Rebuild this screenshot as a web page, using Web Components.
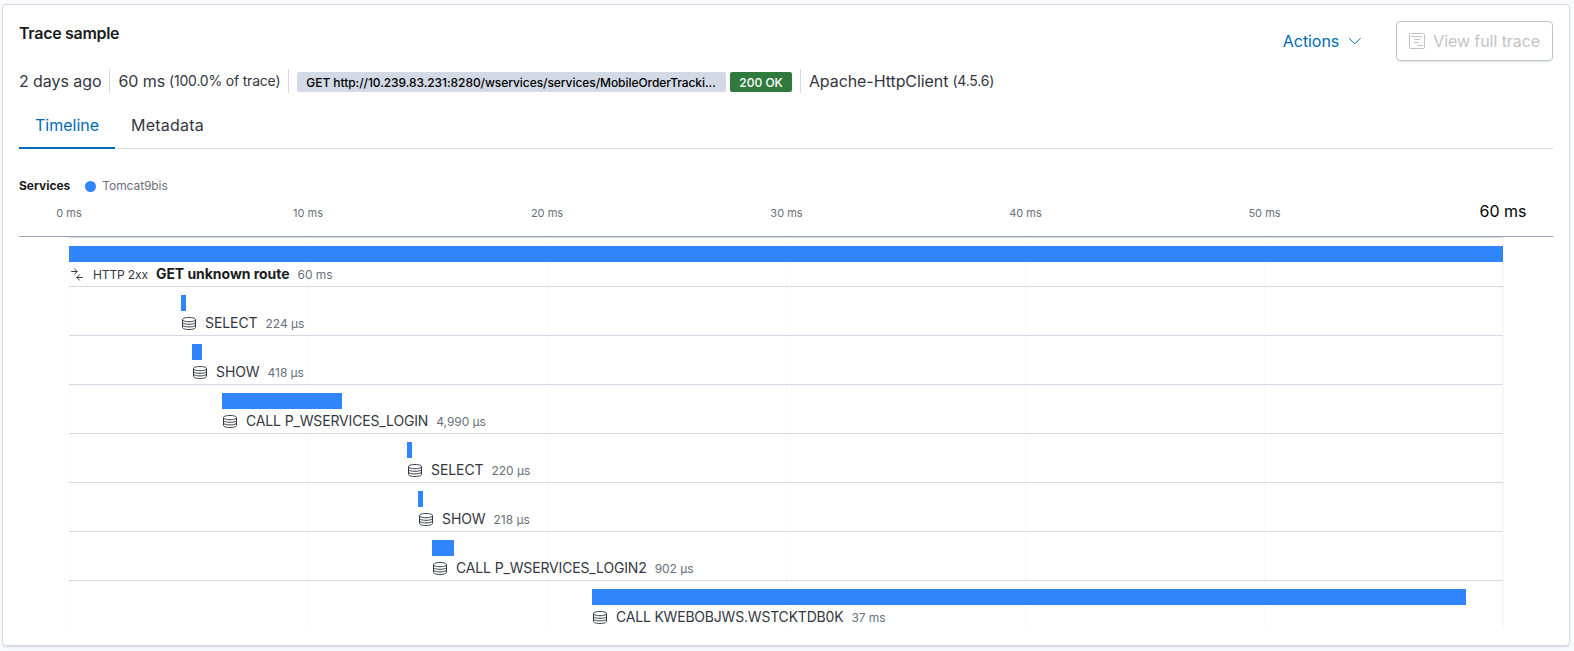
<!DOCTYPE html>
<html lang="en">
<head>
<meta charset="utf-8">
<title>Trace sample</title>
<style>
body{margin:0;background:#fafbfd;font-family:Inter,"Liberation Sans",sans-serif;color:#343741;height:651px;overflow:hidden}
</style>
</head>
<body>
<trace-panel></trace-panel>
<script>
const define = (name, html, setup) => {
  const t = document.createElement('template');
  t.innerHTML = html;
  customElements.define(name, class extends HTMLElement {
    constructor() {
      super();
      this.attachShadow({mode: 'open'}).append(t.content.cloneNode(true));
    }
    connectedCallback() { if (setup) setup(this, this.shadowRoot); }
  });
};

const ICONS = {
  db: '<path d="M1.500 4.600C1.500 3.300 4.200 2.500 8 2.500s6.500.8 6.500 2.100S11.800 6.700 8 6.700 1.500 5.900 1.500 4.600zM1.500 4.600v7.700c0 1.300 2.700 2.200 6.500 2.200s6.500-.9 6.500-2.200V4.600M1.500 7.200c0 1.300 2.700 2.100 6.500 2.100s6.500-.8 6.500-2.100M1.500 9.800c0 1.300 2.700 2.100 6.500 2.100s6.500-.8 6.500-2.100"/>',
  merge: '<path d="M2.200 5.500H8M5.200 2.500 8.200 5.500 5.200 8.500M13.800 11.500H8M10.800 8.500 7.800 11.500l3 3"/>',
  trace: '<rect x=".5" y=".5" width="15" height="15" rx="1.200"/><path d="M2 3.500h11M5 6.500h6M5 9.500h5M8 12.500h6"/>',
  down: '<path d="m2 5.200 5.200 5.100a.9.9 0 0 0 1.200 0L13.600 5.200"/>'
};
define('ui-icon', `<style>:host{display:block;flex:none;width:16px;height:16px}svg{display:block;fill:none;stroke:currentColor;stroke-width:var(--sw,1)}</style><svg width="100%" height="100%" viewBox="0 0 16 16"></svg>`,
  (h, r) => r.querySelector('svg').innerHTML = ICONS[h.getAttribute('name')]);

define('ui-badge', `<style>
:host{display:block;box-sizing:border-box;height:20px;line-height:22px;border-radius:2px;padding:0 9px;font-size:12px;font-weight:500;letter-spacing:-.06px;background:#d3dae6;color:#000;white-space:nowrap}
:host([success]){background:#317a3e;color:#fff;letter-spacing:0}
</style><slot></slot>`);

define('summary-item', `<style>
:host{display:block;height:24px;line-height:24px;font-size:16px;white-space:nowrap;border-right:1px solid #d3dae6;padding-right:8px;margin-right:8px}
:host(:last-child){border:0}
::slotted(span){letter-spacing:-.07px}
::slotted(small){font-size:14px;letter-spacing:-.2px}
::slotted(ui-badge){margin-top:3px}
div{display:flex;gap:4px}
</style><div><slot></slot></div>`);

define('ui-tab', `<style>
:host{display:block;box-sizing:border-box;height:40px;line-height:32px;padding:0 16px;font-size:16px;letter-spacing:.2px}
:host([selected]){color:#006bb4;border-bottom:2px solid #006bb4;letter-spacing:0}
</style><slot></slot>`);

define('ui-button', `<style>
:host{display:flex;box-sizing:border-box;align-items:center;height:40px;font-size:16px;gap:8px;color:#006bb4;white-space:nowrap;letter-spacing:-.07px}
:host([disabled]){color:#c2c3c6;border:1px solid #c2c3c6;border-radius:4px;padding:0 12px;box-shadow:0 2px 2px -1px rgba(152,162,179,.3)}
</style><slot></slot>`);

define('service-legend', `<style>
:host{display:flex;align-items:center;height:18px;line-height:17px;font-size:12px;color:#69707d}
b{color:#1a1c21;font-weight:700;margin-right:15px;letter-spacing:-.02px}
i{width:11px;height:11px;border-radius:50%;background:#3185fc;margin-right:6px}
span{letter-spacing:-.08px}
b,span{height:18px}
</style><b>Services</b><i></i><span><slot></slot></span>`);

define('time-axis', `<style>
:host{display:grid;grid-template-columns:repeat(6,239px) 100px;box-sizing:border-box;height:36px;margin-top:6px;padding-top:5px;border-bottom:1px solid #98a2b3}
span{font-size:11px;line-height:15px;text-align:center;color:#69707d;width:100px}
span:nth-of-type(n+4){text-indent:1px}
span:last-child{font-size:16px;color:#000;line-height:22px;margin-top:-6px;text-indent:0}
</style>`, (h, r) => {
  for (let i = 0; i < 7; i++) {
    const s = document.createElement('span');
    s.textContent = i * 10 + ' ms';
    r.append(s);
  }
});

define('trace-row', `<style>
:host{display:block;box-sizing:border-box;height:49px;border-top:1px solid #d3dae6;padding-top:8px}
.bar{height:16px;background:#3185fc}
.label{display:flex;align-items:baseline;height:24px;line-height:24px;white-space:nowrap;width:max-content;color:#343741;font-size:14px}
ui-icon{align-self:center;margin-right:8px}
.status{font-size:12px;margin-right:8px;letter-spacing:-.12px}
.name{letter-spacing:-.08px}
:host([long]) .name{letter-spacing:-.15px}
:host([longest]) .name{letter-spacing:-.2px}
:host([root]) .name{font-weight:700;color:#1a1c21;letter-spacing:-.04px}
.time{font-size:12px;color:#69707d;margin-left:8px;letter-spacing:-.04px}
</style><div class="bar"></div><div class="label"><ui-icon></ui-icon><span class="status"></span><span class="name"><slot></slot></span><span class="time"></span></div>`,
(h, r) => {
  const a = n => h.getAttribute(n), q = s => r.querySelector(s);
  q('.bar').style.marginLeft = q('.label').style.marginLeft = a('x') + 'px';
  q('.bar').style.width = a('w') + 'px';
  q('ui-icon').setAttribute('name', a('icon') || 'db');
  q('ui-icon').connectedCallback();
  if (a('status')) q('.status').textContent = a('status'); else q('.status').remove();
  q('.time').textContent = a('time');
});

define('trace-waterfall', `<style>
:host{display:block;position:relative;width:1434px;margin-left:50px;height:391px}
svg{position:absolute;left:0;top:0;width:1436px;height:391px;z-index:0;overflow:visible}
div{position:relative}
</style><svg><g stroke="#eef0f3" stroke-dasharray="1 1"></g></svg><div><slot></slot></div>`,
(h, r) => {
  let s = '';
  for (let i = 0; i < 7; i++) s += i < 6
    ? `<path d="M${i * 239 + .5} 0V391" stroke="#f3f4f7"/>`
    : `<path d="M1434 0V391" stroke-width="2"/>`;
  r.querySelector('g').innerHTML = s;
});

define('trace-panel', `<style>
:host{display:flex;flex-direction:column;box-sizing:border-box;width:1568px;height:642px;margin:4px 0 0 2px;padding:16px;border:1px solid #d3dae6;border-radius:4px;background:#fff;box-shadow:0 2px 2px -1px rgba(152,162,179,.3),0 1px 5px -2px rgba(152,162,179,.3)}
header,.summary,nav,service-legend,time-axis,trace-waterfall{flex:none}
header{display:flex;height:40px;align-items:center}
h2{font-size:16px;font-weight:600;line-height:24px;color:#1a1c21;margin:-16px auto 0 0;letter-spacing:-.3px}
header ui-button:first-of-type{margin-right:33px}
.summary{display:flex;height:24px;margin-top:8px}
nav{display:flex;height:39px;margin-top:16px;border-bottom:1px solid #d3dae6}
service-legend{margin-top:28px}
.url{width:429px}
</style>
<header><h2>Trace sample</h2>
<ui-button><span>Actions</span><ui-icon name="down"></ui-icon></ui-button>
<ui-button disabled><ui-icon name="trace"></ui-icon><span>View full trace</span></ui-button></header>
<div class="summary">
<summary-item><span>2 days ago</span></summary-item>
<summary-item><span>60 ms</span><small>(100.0% of trace)</small></summary-item>
<summary-item><ui-badge class="url">GET http://10.239.83.231:8280/wservices/services/MobileOrderTracki...</ui-badge><ui-badge success>200 OK</ui-badge></summary-item>
<summary-item><span>Apache-HttpClient</span><small>(4.5.6)</small></summary-item>
</div>
<nav><ui-tab selected>Timeline</ui-tab><ui-tab>Metadata</ui-tab></nav>
<service-legend>Tomcat9bis</service-legend>
<time-axis></time-axis>
<trace-waterfall>
<trace-row root icon="merge" x="0" w="1434" status="HTTP 2xx" time="60 ms">GET unknown route</trace-row>
<trace-row x="112" w="5" time="224 μs">SELECT</trace-row>
<trace-row x="123" w="10" time="418 μs">SHOW</trace-row>
<trace-row long x="153" w="120" time="4,990 μs">CALL P_WSERVICES_LOGIN</trace-row>
<trace-row x="338" w="5" time="220 μs">SELECT</trace-row>
<trace-row x="349" w="5" time="218 μs">SHOW</trace-row>
<trace-row long x="363" w="22" time="902 μs">CALL P_WSERVICES_LOGIN2</trace-row>
<trace-row longest x="523" w="874" time="37 ms">CALL KWEBOBJWS.WSTCKTDB0K</trace-row>
</trace-waterfall>`);
</script>
</body>
</html>
